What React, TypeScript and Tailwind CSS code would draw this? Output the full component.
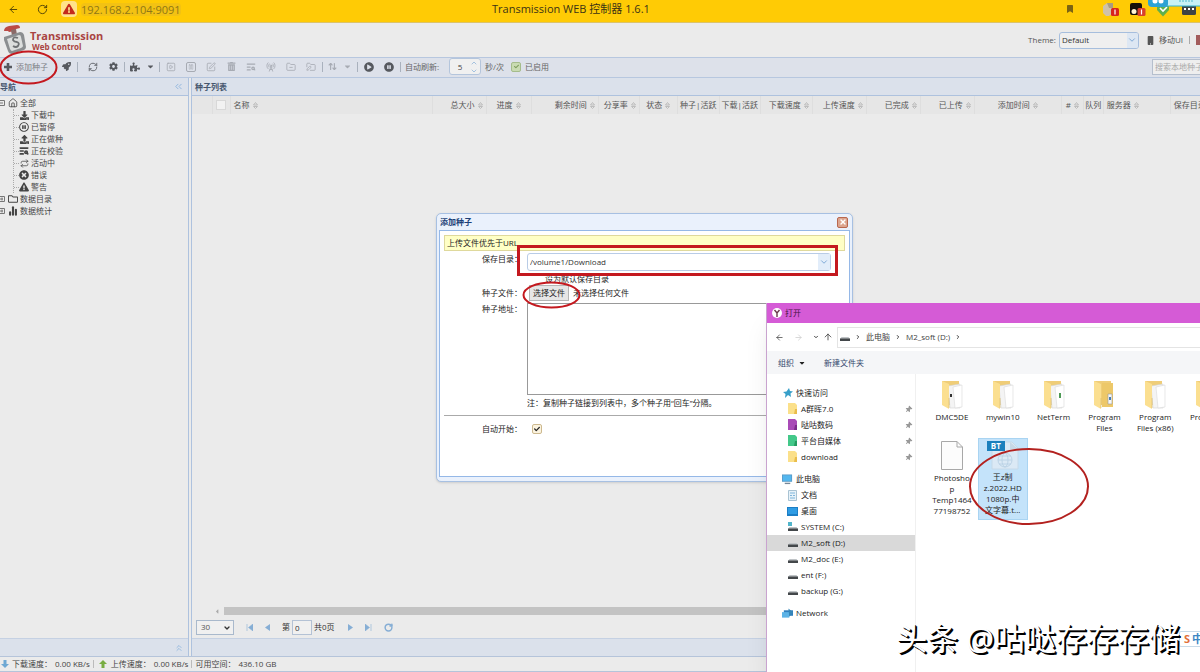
import React from "react";
import {
  FaRocket, FaCog, FaPuzzlePiece, FaCaretDown, FaTrashAlt, FaPlayCircle, FaPauseCircle, FaDownload, FaUpload,
  FaTimesCircle, FaExclamationTriangle, FaRegFolder, FaBookmark, FaMobile, FaThumbtack, FaRegPauseCircle, FaCheck,
} from "react-icons/fa";
import {
  ArrowLeft, ArrowRight, ArrowUp, RotateCw, ChevronDown, ChevronRight, ChevronUp, ChevronsLeft, ChevronsUp,
  RefreshCw, SquarePlay, SquarePen, House, TextSearch, FolderMinus, FolderPen, ChartNoAxesColumn,
  ArrowUpDown, X, RadioTower, Repeat, Pause,
} from "lucide-react";

const Sep = () => <span className="mx-px h-2.5 w-px shrink-0 bg-[#a9b1bd]" />;

function Tool({ label, dim, wide, children }: { label: string; dim?: boolean; wide?: boolean; children: React.ReactNode }) {
  return (
    <button
      aria-label={label}
      className={`flex h-4 shrink-0 items-center justify-center gap-1.5 ${wide ? "w-8" : "w-5"} ${dim ? "text-[#a7abb3]" : "text-[#56595f]"}`}
    >
      {children}
    </button>
  );
}

function BrowserBar() {
  return (
    <header className="relative flex h-[23px] shrink-0 items-center border-b border-[#dcc36a] bg-[#ffcb05] pb-1 text-[11px] text-[#3b3315]">
      <button aria-label="后退" className="ml-2 text-[#4d3f08]"><ArrowLeft size={11} /></button>
      <button aria-label="刷新" className="ml-[18px] text-[#4d3f08]"><RotateCw size={11} /></button>
      <span className="ml-[13px] flex size-4 items-center justify-center rounded bg-[#ffe28a] text-[#c32a1c]">
        <FaExclamationTriangle size={12} />
      </span>
      <span className="ml-1 rounded bg-[#f3c213] leading-[13px] text-[#8f7716]">192.168.2.104:9091</span>
      <h1 className="absolute left-[492px] text-[11px] whitespace-nowrap">Transmission WEB 控制器 1.6.1</h1>
      <div className="ml-auto flex items-center">
        <FaBookmark size={8} className="mr-7 text-[#7c6413]" />
        <svg width="17" height="15" viewBox="0 0 17 15" className="mr-[11px]">
          <path d="M1 4 5 1h6v10l-4 3H4L1 11z" fill="#cfc2a8" />
          <path d="M5 1h6v5H7z" fill="#a99c80" />
          <rect x="9" y="6" width="8" height="8" rx="1.5" fill="#d8251c" />
          <path d="M13 7.5v5" stroke="#fff" strokeWidth="1.2" />
        </svg>
        <svg width="16" height="15" viewBox="0 0 16 15" className="mr-2.5">
          <rect width="12" height="12" y="1" rx="2" fill="#15110a" />
          <circle cx="4" cy="9.500" r="2.500" fill="#fff3d2" />
          <rect x="7.500" y="6" width="8" height="8" rx="1.500" fill="#d8402c" />
          <path d="M11.500 7.500v5" stroke="#fff" strokeWidth="1.200" />
        </svg>
        <svg width="14" height="16" viewBox="0 0 14 16" className="mr-3">
          <path d="M1 3h12v6l-6 6.500L1 9z" fill="#5fb04c" />
          <path d="m4 7 3 3 4-4" stroke="#fff" strokeWidth="1.600" fill="none" />
        </svg>
        <svg width="14" height="11" viewBox="0 0 14 11" className="mr-1">
          <rect width="14" height="11" rx="1.500" fill="#3e4445" />
          <path d="M2 5h2m2 0h2m2 0h2" stroke="#fff" strokeWidth="2" />
        </svg>
      </div>
      <svg width="52" height="8" viewBox="0 0 52 8" className="absolute top-0 right-0">
        <path d="M18 0h34v6H18z" fill="#c8f1f5" />
        <path d="M18 6h34" stroke="#35b3cf" />
        <path d="M0 0h20v4q0 3-3 3H4Q0 7 0 3z" fill="#2ba3d4" />
        <circle cx="7" cy="1" r="2.500" fill="#fff" />
        <circle cx="13" cy="1" r="2.500" fill="#fff" />
        <path d="M31 1h15" stroke="#4cb9cd" strokeDasharray="2 1" />
      </svg>
    </header>
  );
}

function AppHeader() {
  return (
    <div className="flex h-[34px] shrink-0 items-center text-[#555]">
      <svg width="26" height="30" viewBox="0 0 26 30" className="ml-[3px]">
        <path d="M1 6Q1 2 6 1l8-1q3 0 3 3l-4 1-1 2-6 1-1-1z" fill="#bb4a46" />
        <path d="m8 5 5-1 1 6-5 1z" fill="#8a6a68" />
        <path d="m1 12 16-5q3 0 4 3l2 12q0 2-2 3L9 29q-3 0-4-3L1 15z" fill="#8b8e90" />
        <path d="m4 14 12-4q2 0 2 2l2 9q0 1-2 2l-9 3q-1 0-2-2z" fill="#dcdedd" />
        <path d="M15 13q-5-2-5 2 1 2 4 2 3 1 1 4-2 2-5 0" stroke="#6f7274" strokeWidth="1.800" fill="none" />
      </svg>
      <div className="ml-px font-bold text-[#a94442]">
        <div className="text-[11px] leading-[13px]">Transmission</div>
        <div className="pl-0.5 text-[8px] leading-[9px]">Web Control</div>
      </div>
      <div className="ml-auto flex items-center">
        <label htmlFor="theme">Theme:</label>
        <div className="relative ml-[3px]">
          <select id="theme" className="h-[17px] w-20 appearance-none rounded-[3px] border border-[#a6bedd] bg-[#efefef] pl-0.5 text-[#333]">
            <option>Default</option>
          </select>
          <span className="pointer-events-none absolute inset-y-px right-px flex w-[11px] items-center rounded-r-[2px] bg-[#dde7f3] text-[#6d9dd0]"><ChevronDown size={10} /></span>
        </div>
        <button className="ml-[7px] flex items-center gap-1"><FaMobile size={9} />移动UI</button>
        <span className="mx-[6px] h-2 w-px bg-[#aaa]" />
        <span className="h-2.5 w-1 bg-[#a35c5c]" />
      </div>
    </div>
  );
}

function Toolbar() {
  return (
    <div className="flex h-[21px] shrink-0 items-center overflow-hidden border-y border-[#b7c7df] bg-[#dde1ea] pb-0.5 text-[#666]">
      <button className="flex w-14 shrink-0 items-center gap-1 pl-1 text-[#7b7e84]">
        <svg width="8" height="8" viewBox="0 0 8 8"><path d="M4 0v8M0 4h8" stroke="#56595f" strokeWidth="2.600" /></svg>添加种子
      </button>
      <Tool label="磁力链接"><FaRocket size={9} /></Tool><Sep />
      <span className="w-1" />
      <Tool label="刷新"><RefreshCw size={10} /></Tool>
      <Tool label="设置"><FaCog size={9} /></Tool><Sep />
      <Tool label="插件" wide><FaPuzzlePiece size={10} /><FaCaretDown size={9} /></Tool><Sep />
      <Tool label="开始" dim><SquarePlay size={10} /></Tool>
      <Tool label="暂停" dim>
        <span className="flex size-2.5 items-center justify-center rounded-xs border"><Pause size={6} /></span>
      </Tool>
      <Tool label="编辑" dim><SquarePen size={10} /></Tool>
      <Tool label="删除" dim><FaTrashAlt size={9} /></Tool>
      <Tool label="校验" dim><TextSearch size={10} strokeWidth={3} /></Tool>
      <Tool label="服务器" dim><RadioTower size={10} /></Tool>
      <Tool label="目录" dim><FolderMinus size={10} /></Tool>
      <Tool label="重命名" dim><FolderPen size={10} /></Tool><Sep />
      <Tool label="队列" dim wide><ArrowUpDown size={9} strokeWidth={3} /><FaCaretDown size={9} /></Tool><Sep />
      <Tool label="全部开始"><FaPlayCircle size={10} /></Tool>
      <Tool label="全部暂停"><FaPauseCircle size={10} /></Tool><Sep />
      <label htmlFor="interval" className="ml-[3px] shrink-0">自动刷新:</label>
      <div className="ml-2.5 flex h-[17px] w-8 shrink-0 items-center rounded-[3px] border border-[#b4c5dc] bg-[#f0f0f0]">
        <input id="interval" defaultValue="5" className="w-5 text-center text-[#444]" />
        <span className="flex flex-col text-[#7eaad6]"><ChevronUp size={8} /><ChevronDown size={8} /></span>
      </div>
      <span className="ml-1 shrink-0">秒/次</span>
      <button className="ml-[7px] flex shrink-0 items-center gap-1">
        <span className="flex size-2.5 items-center justify-center rounded-xs border border-[#a5bc8b] bg-[#c9dbb2] text-[#7d9b5c]"><FaCheck size={5} /></span>
        已启用
      </button>
      <input aria-label="搜索" placeholder="搜索本地种子" className="ml-auto h-4 w-12 shrink-0 border border-r-0 border-[#b5bfcd] bg-[#eee] pl-0.5 placeholder:text-[#aaa]" />
    </div>
  );
}

const tree = [
  { text: "下载中", icon: <FaDownload size={9} /> },
  { text: "已暂停", icon: <FaRegPauseCircle size={10} /> },
  { text: "正在做种", icon: <FaUpload size={9} /> },
  { text: "正在校验", icon: <TextSearch size={10} strokeWidth={4} /> },
  { text: "活动中", icon: <Repeat size={9} /> },
  { text: "错误", icon: <FaTimesCircle size={10} /> },
  { text: "警告", icon: <FaExclamationTriangle size={10} /> },
];

const Toggle = ({ open }: { open?: boolean }) => (
  <svg width="6" height="12" viewBox="0 0 6 12" className="shrink-0 text-[#777]">
    <path d="M0 3.500h4.500v5H0M0 6h3" stroke="currentColor" fill="none" />
    {!open && <path d="M2 4.500v3" stroke="currentColor" />}
  </svg>
);

function Sidebar() {
  return (
    <aside className="flex w-[189px] shrink-0 flex-col border-r border-[#aec2de]">
      <div className="flex h-[18px] items-center justify-between border-b border-[#aec2de] bg-[#dbe1eb] pr-1 font-bold text-[#46566e]">
        <span>导航</span>
        <button aria-label="折叠"><ChevronsLeft size={11} className="text-[#8db4dd]" /></button>
      </div>
      <ul className="flex-1 pt-px text-[#444]">
        <li className="flex h-3 items-center"><Toggle open /><House size={10} className="mr-0.5 ml-[2px]" />全部</li>
        <li>
          <ul className="ml-[13px] border-l border-dotted border-[#aaa]">
            {tree.map((t) => (
              <li key={t.text} className="flex h-3 items-center">
                <span className="w-[5px] border-t border-dotted border-[#aaa]" />
                <span className="mr-0.5 flex w-2.5 justify-center">{t.icon}</span>{t.text}
              </li>
            ))}
          </ul>
        </li>
        <li className="flex h-3 items-center"><Toggle /><FaRegFolder size={10} className="mr-0.5 ml-[2px]" />数据目录</li>
        <li className="flex h-3 items-center"><Toggle /><ChartNoAxesColumn size={10} strokeWidth={5} className="mr-0.5 ml-[2px]" />数据统计</li>
      </ul>
      <div className="flex h-[18px] items-center justify-end border-t border-[#c5d1e3] bg-[#dbe1eb] pr-1">
        <button aria-label="展开"><ChevronsUp size={10} className="text-[#8db4dd]" /></button>
      </div>
    </aside>
  );
}

const columns: { text: string; width: string; align: string; sort?: boolean }[] = [
  { text: "名称", width: "w-[202px]", align: "justify-start", sort: true },
  { text: "总大小", width: "w-[54px]", align: "justify-end", sort: true },
  { text: "进度", width: "w-[45px]", align: "justify-center", sort: true },
  { text: "剩余时间", width: "w-[67px]", align: "justify-end", sort: true },
  { text: "分享率", width: "w-[41px]", align: "justify-end", sort: true },
  { text: "状态", width: "w-[38px]", align: "justify-center", sort: true },
  { text: "种子|活跃", width: "w-[42px]", align: "justify-center" },
  { text: "下载|活跃", width: "w-[41px]", align: "justify-center" },
  { text: "下载速度", width: "w-[52px]", align: "justify-end", sort: true },
  { text: "上传速度", width: "w-[54px]", align: "justify-end", sort: true },
  { text: "已完成", width: "w-[54px]", align: "justify-end", sort: true },
  { text: "已上传", width: "w-[54px]", align: "justify-end", sort: true },
  { text: "添加时间", width: "w-[87px]", align: "justify-center", sort: true },
  { text: "#", width: "w-[22px]", align: "justify-center", sort: true },
  { text: "队列", width: "w-[20px]", align: "justify-center" },
  { text: "服务器", width: "w-[67px]", align: "justify-start", sort: true },
  { text: "保存目录", width: "w-[60px]", align: "justify-start", sort: true },
];

const SortMark = () => (
  <svg width="5" height="7" viewBox="0 0 5 7" className="shrink-0">
    <path d="M.5 3 2.500.5 4.500 3zM.5 4.500l2 2 2-2z" fill="none" stroke="#b3b3b3" strokeWidth=".8" />
  </svg>
);

function TorrentList() {
  return (
    <main className="ml-0.5 flex min-w-0 flex-1 flex-col border-l border-[#aec2de]">
      <h2 className="flex h-[18px] shrink-0 items-center border-b border-[#aec2de] bg-[#dbe1eb] pl-[3px] font-bold text-[#46566e]">种子列表</h2>
      <div className="flex-1 overflow-hidden">
        <table className="w-[1039px] table-fixed border-collapse text-[#555]">
          <thead>
            <tr className="h-[18px] bg-[#e6e6e6]">
              <th className="w-5 border-r border-[#dedede]" />
              <th className="w-[18px] border-r border-[#dedede] p-0">
                <input type="checkbox" aria-label="全选" className="mx-auto block size-2.5 appearance-none border border-[#d8d8d8] bg-[#f2f2f2]" />
              </th>
              {columns.map((c) => (
                <th key={c.text} className={`${c.width} border-r border-[#dedede] p-0 font-normal`}>
                  <div className={`flex items-center gap-[3px] px-[3px] whitespace-nowrap ${c.align}`}>{c.text}{c.sort && <SortMark />}</div>
                </th>
              ))}
            </tr>
          </thead>
        </table>
      </div>
      <div className="flex h-2.5 shrink-0 items-center pl-[22px] text-[#aaa]">
        <FaCaretDown size={7} className="mr-[3px] rotate-90" />
        <div className="h-2 flex-1 bg-[#c3c3c3]" />
      </div>
      <div className="flex h-[22px] shrink-0 items-center pl-1 text-[#555]">
        <div className="relative">
          <select aria-label="每页" className="h-[15px] w-[38px] appearance-none border border-[#a9b9cc] bg-[#f0f0f0] pl-1"><option>30</option></select>
          <ChevronDown size={8} strokeWidth={4} className="pointer-events-none absolute top-1 right-[3px] text-[#333]" />
        </div>
        <div className="ml-3 flex items-center gap-3 text-[#86aed5]">
          <button aria-label="首页"><svg width="7" height="7"><path d="M1 0v7M7 0v7L2.500 3.500z" fill="currentColor" stroke="currentColor" strokeWidth=".6" /></svg></button>
          <button aria-label="上一页"><svg width="5" height="7"><path d="M5 0v7L0 3.500z" fill="currentColor" /></svg></button>
        </div>
        <label className="ml-3 flex items-center text-[#333]">
          第<input defaultValue="0" className="mx-0.5 h-[15px] w-5 border border-[#b4c2d5] bg-[#f0f0f0] pl-0.5" />共0页
        </label>
        <div className="ml-[13px] flex items-center gap-3 text-[#86aed5]">
          <button aria-label="下一页"><svg width="5" height="7"><path d="M0 0v7l5-3.500z" fill="currentColor" /></svg></button>
          <button aria-label="末页"><svg width="7" height="7"><path d="M6 0v7M0 0v7l4.500-3.500z" fill="currentColor" stroke="currentColor" strokeWidth=".6" /></svg></button>
          <button aria-label="刷新列表"><RotateCw size={9} strokeWidth={4} /></button>
        </div>
      </div>
      <div className="h-[18px] shrink-0 border-t border-[#c5d1e3] bg-[#dbe1eb]" />
    </main>
  );
}

function AddDialog() {
  return (
    <section className="absolute top-[213px] left-[436px] w-[417px] rounded-[5px] border border-[#a7c0e2] bg-[#eaf1fc] px-0.5 pb-1 shadow">
      <div className="flex h-4 items-center justify-between pr-0.5 pl-px font-bold text-[#1d3f77]">
        <h2>添加种子</h2>
        <button aria-label="关闭" className="flex size-[11px] items-center justify-center rounded-xs border border-[#b9684f] bg-[#dca58f] text-white"><X size={8} strokeWidth={4} /></button>
      </div>
      <form className="flex h-[247px] flex-col border border-[#95b8e7] bg-white p-1 text-[#222]">
        <p className="h-4 shrink-0 border border-[#dfd99c] bg-[#ffffc6] px-0.5 leading-[14px]">上传文件优先于URL</p>
        <div className="flex items-start">
          <label htmlFor="dir" className="w-[78px] pt-0.5 text-right">保存目录：</label>
          <div className="relative ml-[5px] pt-0.5">
            <select id="dir" className="h-[18px] w-[304px] appearance-none rounded-[3px] border border-[#b9cce6] bg-white pl-0.5 text-[#333]"><option>/volume1/Download</option></select>
            <span className="pointer-events-none absolute top-[3px] right-px flex h-4 w-3 items-center justify-center bg-[#e2edfa] text-[#6d9dd0]"><ChevronDown size={10} /></span>
          </div>
        </div>
        <label className="ml-[90px] flex h-3 items-center gap-1 pt-1"><input type="checkbox" className="size-[7px] appearance-none" />设为默认保存目录</label>
        <div className="flex h-5 items-center">
          <span className="w-[78px] text-right">种子文件：</span>
          <button type="button" className="ml-[7px] h-4 w-10 border border-[#b5b5b5] bg-[#e6e6e6]">选择文件</button>
          <span className="ml-1">未选择任何文件</span>
        </div>
        <div className="flex items-start">
          <label htmlFor="urls" className="w-[78px] text-right">种子地址：</label>
          <textarea id="urls" className="ml-[5px] h-[92px] w-[304px] resize-none border border-[#999] bg-white" />
        </div>
        <p className="ml-[83px] pt-0.5 leading-3">注：复制种子链接到列表中，多个种子用“回车”分隔。</p>
        <hr className="mt-1.5 border-[#aaa]" />
        <div className="flex items-center pt-[7px]">
          <label htmlFor="auto" className="w-[78px] text-right">自动开始：</label>
          <span className="relative ml-2.5 flex size-2.5 items-center justify-center">
            <input id="auto" type="checkbox" defaultChecked className="absolute inset-0 appearance-none rounded-xs border border-[#cdb98f] bg-[#fbf3df]" />
            <FaCheck size={6} className="relative text-[#222]" />
          </span>
        </div>
      </form>
    </section>
  );
}

const FolderSmall = ({ fill, edge }: { fill: string; edge: string }) => (
  <svg width="10" height="12" viewBox="0 0 10 12"><path d="M0 0h7l2 2v9H0z" fill={fill} /><path d="M7 6h2v5H6z" fill={edge} /></svg>
);
const Drive = ({ system }: { system?: boolean }) => (
  <svg width="10" height="10" viewBox="0 0 10 10">
    {system && <path d="M0 0h4v4H0z" fill="#51b5cb" />}
    <path d="M1.500 5h7L10 7H0z" fill="#bfc3c6" /><path d="M0 6.500h10V9H0z" fill="#43474a" />
  </svg>
);
const Monitor = () => (
  <svg width="12" height="11" viewBox="0 0 12 11"><path d="M0 0h11v8H0z" fill="#5a9cc9" /><path d="M1 1h9v6H1z" fill="#53b7ef" /><path d="M3 9h6v1.500H3z" fill="#789" /></svg>
);
const DesktopIcon = () => (
  <svg width="11" height="9" viewBox="0 0 11 9"><path d="M0 0h11v9H0z" fill="#1c7ec5" /><path d="M1 1h9v6H1z" fill="#2f9ce4" /></svg>
);
const DocIcon = () => (
  <svg width="9" height="11" viewBox="0 0 9 11"><path d="M.5.5h8v10h-8z" fill="#e7f2f9" stroke="#a9c3d3" /><path d="M2 3h5M2 5.500h2m1 0h2M2 8h5" stroke="#7fb6db" /></svg>
);
const NetworkIcon = () => (
  <svg width="12" height="11" viewBox="0 0 12 11"><path d="M2 2h10v6H2z" fill="#2f7fbe" /><path d="M0 4h8v6H0z" fill="#5cb3e6" /><path d="M7 0 12 4 8 9z" fill="#3687b8" /></svg>
);
const Star = () => (
  <svg width="10" height="10" viewBox="0 0 10 10"><path d="m6 0 1 3 3 .5-2.500 2L8 9 5 7 2 10l.5-4L0 4l3.500-.5z" fill="#379fc9" /></svg>
);

const places: { text: string; icon: React.ReactNode; pin?: boolean; on?: boolean }[][] = [
  [
    { text: "A群晖7.0", icon: <FolderSmall fill="#fbe08a" edge="#e9bd4b" />, pin: true },
    { text: "哒咕数码", icon: <FolderSmall fill="#a94bb7" edge="#7b2b8a" />, pin: true },
    { text: "平台自媒体", icon: <FolderSmall fill="#43c889" edge="#249a60" />, pin: true },
    { text: "download", icon: <FolderSmall fill="#fbe08a" edge="#e9bd4b" />, pin: true },
  ],
  [
    { text: "文档", icon: <DocIcon /> },
    { text: "桌面", icon: <DesktopIcon /> },
    { text: "SYSTEM (C:)", icon: <Drive system /> },
    { text: "M2_soft (D:)", icon: <Drive />, on: true },
    { text: "M2_doc (E:)", icon: <Drive /> },
    { text: "ent (F:)", icon: <Drive /> },
    { text: "backup (G:)", icon: <Drive /> },
  ],
];

function PlaceGroup({ title, icon, items }: { title: string; icon: React.ReactNode; items: (typeof places)[number] }) {
  return (
    <div className="mb-1.5">
      <div className="flex h-4 items-center gap-[3px] pl-[15px]"><span className="flex w-[11px] justify-center">{icon}</span>{title}</div>
      {items.map((p) => (
        <div key={p.text} className={`flex h-4 items-center gap-[3px] pr-[3px] pl-5 ${p.on ? "bg-[#d9d9d9]" : ""}`}>
          <span className="flex w-[11px] justify-center">{p.icon}</span>{p.text}
          {p.pin && <FaThumbtack size={7} className="ml-auto rotate-45 text-[#999]" />}
        </div>
      ))}
    </div>
  );
}

function FolderIcon({ kind }: { kind: number }) {
  return (
    <svg width="22" height="30" viewBox="0 0 22 30">
      <path d="M1 1h17v24H1z" fill="#efcd78" />
      {kind === 3 ? <path d="M9 3h11v24H9z" fill="#edc869" /> : <path d="M7 6 19 4v24H9z" fill="#f4f4f4" stroke="#d3d3d3" strokeWidth=".6" />}
      {kind !== 3 && <path d="M12 7 21 5v22l-7 1z" fill="#fff" stroke="#d8d8d8" strokeWidth=".6" />}
      {kind === 3 && <path d="M15 14h4v10h-4z" fill="#f7f7f7" stroke="#999" strokeWidth=".6" />}
      {kind === 0 && <path d="M9 14h2v3H9z" fill="#333" />}
      {kind === 2 && <path d="M16 13h2v5h-2z" fill="#4d9a55" />}
      {kind === 3 && <path d="M16 17h2v3h-2z" fill="#467db4" />}
      <path d="m1 1 7 3v25l-7-4z" fill="#fbdf90" />
      <path d="M8 18v10" stroke="#d6b868" strokeWidth=".6" />
    </svg>
  );
}

const folders = ["DMC5DE", "mywin10", "NetTerm", "Program Files", "Program Files (x86)", "Program"];

function FileDialog() {
  return (
    <section className="absolute top-[303px] right-0 bottom-0 left-[766px] flex flex-col overflow-hidden border-l border-[#c9a3cf] bg-white text-[#222] shadow-xl">
      <h2 className="flex h-5 shrink-0 items-center gap-[3px] bg-[#d55bd6] pl-[5px] text-[#431444]">
        <svg width="10" height="10" viewBox="0 0 10 10"><circle cx="5" cy="5" r="5" fill="#fff" /><path d="m2.500 2 2.500 3 2.500-3M5 5v4" stroke="#6b3a4d" strokeWidth="1.400" fill="none" /></svg>
        打开
      </h2>
      <div className="flex h-7 shrink-0 items-center pl-2 text-[#444]">
        <button aria-label="返回"><ArrowLeft size={9} /></button>
        <button aria-label="前进" className="ml-2.5 text-[#ccc]"><ArrowRight size={9} /></button>
        <button aria-label="历史" className="ml-2.5"><ChevronDown size={6} strokeWidth={4} /></button>
        <button aria-label="上级" className="ml-1"><ArrowUp size={10} /></button>
        <nav className="ml-1 flex h-[21px] flex-1 items-center border border-r-0 border-[#e4e4e4] pl-0.5">
          <Drive /><ChevronRight size={6} strokeWidth={4} className="mx-[5px]" />此电脑<ChevronRight size={6} strokeWidth={4} className="mx-[5px]" />M2_soft (D:)<ChevronRight size={6} strokeWidth={4} className="mx-[5px]" />
        </nav>
      </div>
      <div className="flex h-[23px] shrink-0 items-center gap-[18px] bg-[#f5f6f8] pl-[11px] text-[#32466b]">
        <button className="flex items-center gap-1">组织<FaCaretDown size={8} className="text-[#222]" /></button>
        <button>新建文件夹</button>
      </div>
      <div className="flex flex-1">
        <div className="w-[149px] shrink-0 border-r border-[#f0f0f0] pt-[11px]">
          <PlaceGroup title="快速访问" icon={<Star />} items={places[0]} />
          <PlaceGroup title="此电脑" icon={<Monitor />} items={places[1]} />
          <PlaceGroup title="Network" icon={<NetworkIcon />} items={[]} />
        </div>
        <div className="grid w-[315px] shrink-0 auto-rows-min grid-cols-6 gap-x-px gap-y-1 pt-1 pl-[11px] text-center leading-[11px]">
          {folders.map((f, i) => (
            <div key={i} className="flex h-[56px] flex-col items-center pt-0.5">
              <FolderIcon kind={i} /><span className="pt-px">{f}</span>
            </div>
          ))}
          <div className="flex h-[82px] flex-col items-center pt-[3px] leading-[11px] break-all">
            <svg width="22" height="29" viewBox="0 0 22 29"><path d="M.5.5H16l5.500 5.500v22.500H.5z" fill="#fcfcfc" stroke="#a8a8a8" /><path d="M16 .5V6h5.500" fill="none" stroke="#a8a8a8" /></svg>
            <span className="pt-0.5">Photosho<br />p<br />Temp1464<br />77198752</span>
          </div>
          <div className="relative flex h-[82px] flex-col items-center border border-[#a9d4f2] bg-[#c4e3fa] pt-0.5 leading-[11px]">
            <svg width="34" height="29" viewBox="0 0 34 29">
              <path d="M6 1h20l6 6v21H6z" fill="#dbe9f5" stroke="#c6d9e8" />
              <path d="M24 1v7h8" fill="#c6d8e7" />
              <g fill="none" stroke="#bcd3e6"><circle cx="19" cy="19" r="7" /><ellipse cx="19" cy="19" rx="3" ry="7" /><path d="M12 19h14M13 15h12M13 23h12" /></g>
            </svg>
            <span className="absolute top-0.5 left-2 bg-[#1b80bd] px-1 text-[8px] leading-[10px] font-bold text-white">BT</span>
            <span className="pt-px whitespace-nowrap">王z制<br />z.2022.HD<br />1080p.中<br />文字幕.t...</span>
          </div>
        </div>
      </div>
    </section>
  );
}

export default function App() {
  return (
    <div lang="zh-CN" className="relative flex h-screen flex-col overflow-hidden bg-[#ebebeb] font-['Open_Sans','Noto_Sans_CJK_SC',sans-serif] text-[8px] leading-3">
      <BrowserBar />
      <AppHeader />
      <Toolbar />
      <div className="flex min-h-0 flex-1">
        <Sidebar />
        <TorrentList />
      </div>
      <footer className="flex h-4 shrink-0 items-center border-t border-b border-[#b5c4da] text-[#444]">
        <svg width="8" height="8" viewBox="0 0 8 8" className="mr-[3px] ml-px"><path d="M2.500 0h3v4H8L4 8 0 4h2.500z" fill="#6ea8d3" /></svg>
        下载速度：<span className="ml-[3px]">0.00 KB/s</span>
        <span className="mx-[3px] h-2 w-px bg-[#bbb]" />
        <svg width="8" height="8" viewBox="0 0 8 8" className="mr-1 ml-0.5"><path d="M2.500 8h3V4H8L4 0 0 4h2.500z" fill="#79ad42" /></svg>
        上传速度：<span className="ml-[3px]">0.00 KB/s</span>
        <span className="mx-[3px] h-2 w-px bg-[#bbb]" />
        可用空间：<span className="ml-[3px]">436.10 GB</span>
      </footer>
      <AddDialog />
      <FileDialog />
      <svg width="1200" height="672" viewBox="0 0 1200 672" className="pointer-events-none absolute top-0 left-0" fill="none" stroke="#c4191f">
        <ellipse cx="28.500" cy="67.500" rx="28" ry="16" strokeWidth="2" />
        <path d="M518.500 246.500h318v28h-318z" strokeWidth="3" />
        <ellipse cx="551.500" cy="295" rx="28" ry="12.500" strokeWidth="2" />
        <ellipse cx="1029" cy="486.500" rx="59" ry="37.500" stroke="#b3211f" strokeWidth="2" />
      </svg>
      <div className="absolute right-0 bottom-[25px] flex h-4 items-center rounded-l-xs border border-r-0 border-[#c8dae8] bg-white pl-1 text-[11px] font-bold">
        <span className="text-[#e2703a]">S</span><span className="ml-0.5 w-2 overflow-hidden text-[#3c87c4]">中</span>
      </div>
      <p className="absolute right-5 bottom-[14px] text-[31px] leading-10 whitespace-nowrap text-white [text-shadow:2px_2px_0_#000,1px_1px_0_#000]">头条 @咕哒存存存储</p>
    </div>
  );
}
